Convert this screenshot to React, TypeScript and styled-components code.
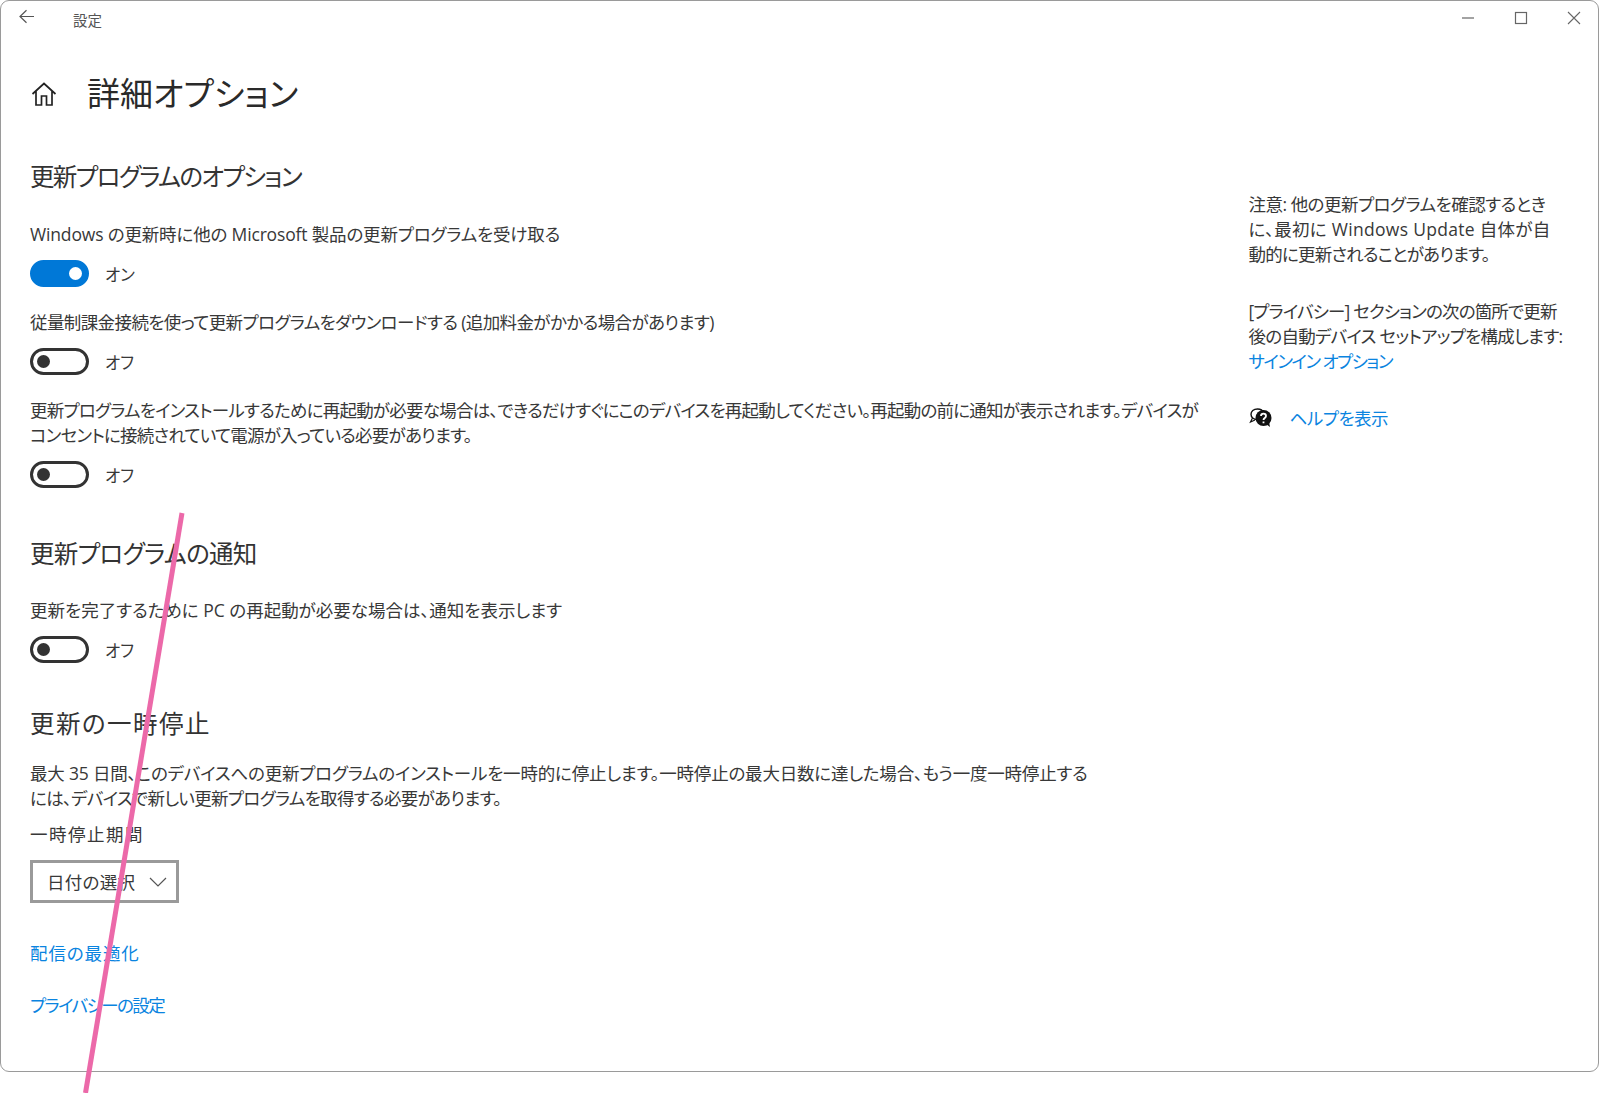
import React from 'react';
import styled, { createGlobalStyle } from 'styled-components';

const GlobalStyle = createGlobalStyle`
  html, body { margin: 0; padding: 0; background: #fff; }
  body {
    font-family: "Open Sans", "Noto Sans CJK JP", sans-serif;
    font-feature-settings: "palt";
    color: #2b2b2b;
  }
`;

const Page = styled.div`
  position: relative;
  width: 1600px;
  height: 1093px;
  overflow: hidden;
  background: #fff;
`;

const Window = styled.div`
  box-sizing: border-box;
  width: 1599px;
  height: 1072px;
  border: 1.5px solid #9a9a9a;
  border-radius: 9px;
`;

const TitleBar = styled.div`
  display: flex;
  align-items: center;
  height: 32px;
  padding-left: 17px;
  color: #555;
`;

const TitleText = styled.span`
  font-size: 14.5px;
  margin-left: 37px;
  margin-top: 5px;
`;

const WindowButtons = styled.div`
  display: flex;
  margin-left: auto;
  gap: 39px;
  padding-right: 17px;
  margin-top: 1px;
`;

const Body = styled.div`
  display: flex;
`;

const Main = styled.main`
  width: 1218px;
  padding-left: 29px;
`;

const PageHead = styled.div`
  display: flex;
  align-items: center;
  gap: 29px;
  margin-top: 38px;
  height: 46px;
`;

const PageTitle = styled.h1`
  margin: 0;
  font-size: 33px;
  font-weight: 400;
  line-height: 46px;
  color: #2a2a2a;
`;

const SectionTitle = styled.h2<{ $top: number; $ls: number }>`
  margin: ${({ $top }) => $top}px 0 0;
  font-size: 24.5px;
  font-weight: 400;
  line-height: 34px;
  letter-spacing: ${({ $ls }) => $ls}px;
  color: #333;
`;

const Text = styled.div<{ $top: number }>`
  margin-top: ${({ $top }) => $top}px;
  font-size: 17.5px;
  line-height: 25px;
  color: #383838;
`;

const Line = styled.span<{ $ls?: number }>`
  display: block;
  white-space: nowrap;
  letter-spacing: ${({ $ls }) => $ls ?? 0}px;
`;

const ToggleRow = styled.div<{ $top: number }>`
  display: flex;
  align-items: center;
  gap: 16px;
  height: 27px;
  margin-top: ${({ $top }) => $top}px;
  font-size: 16.5px;
  color: #383838;
`;

const Track = styled.span<{ $on: boolean }>`
  box-sizing: border-box;
  display: flex;
  align-items: center;
  justify-content: ${({ $on }) => ($on ? 'flex-end' : 'flex-start')};
  width: 59px;
  height: 27px;
  padding: 0 4px;
  border-radius: 14px;
  border: 3px solid ${({ $on }) => ($on ? '#0078d7' : '#333')};
  background: ${({ $on }) => ($on ? '#0078d7' : '#fff')};
`;

const Knob = styled.span<{ $on: boolean }>`
  width: 13px;
  height: 13px;
  border-radius: 50%;
  background: ${({ $on }) => ($on ? '#fff' : '#333')};
`;

const Select = styled.div`
  box-sizing: border-box;
  display: flex;
  align-items: center;
  justify-content: space-between;
  width: 149px;
  height: 43px;
  margin-top: 13px;
  padding: 0 9px 0 14px;
  border: 3px solid #9a9a9a;
  font-size: 17.5px;
  letter-spacing: 0.3px;
  color: #383838;
`;

const LinkText = styled.a<{ $top: number; $ls: number }>`
  display: block;
  margin-top: ${({ $top }) => $top}px;
  font-size: 17.5px;
  line-height: 25px;
  letter-spacing: ${({ $ls }) => $ls}px;
  color: #0a84e0;
  text-decoration: none;
`;

const Aside = styled.aside`
  margin-left: 0.5px;
  width: 345px;
  padding-top: 159px;
`;

const HelpRow = styled.div`
  display: flex;
  align-items: center;
  gap: 17px;
  margin-top: 31px;
  height: 25px;
`;

const InlineLink = styled.a<{ $ls: number }>`
  color: #0a84e0;
  text-decoration: none;
  font-size: 17.5px;
  letter-spacing: ${({ $ls }) => $ls}px;
`;

const PinkLine = styled.svg`
  position: absolute;
  left: 0;
  top: 0;
  pointer-events: none;
`;

const Toggle = ({ on }: { on: boolean }) => (
  <>
    <Track $on={on}><Knob $on={on} /></Track>
    <span>{on ? 'オン' : 'オフ'}</span>
  </>
);

const App = () => (
  <Page>
    <GlobalStyle />
    <Window>
      <TitleBar>
        <svg width="18" height="16" viewBox="0 0 18 16" fill="none" stroke="#555" strokeWidth="1.2">
          <path d="M16 7.5H2M8.5 1.2 2 7.5l6.500 6.300" />
        </svg>
        <TitleText>設定</TitleText>
        <WindowButtons>
          <svg width="14" height="14" viewBox="0 0 14 14" stroke="#666" strokeWidth="1.2" fill="none"><path d="M1 7h12" /></svg>
          <svg width="14" height="14" viewBox="0 0 14 14" stroke="#666" strokeWidth="1.2" fill="none"><rect x="1.5" y="1.5" width="11" height="11" /></svg>
          <svg width="14" height="14" viewBox="0 0 14 14" stroke="#666" strokeWidth="1.1" fill="none"><path d="M1 1l12 12M13 1 1 13" /></svg>
        </WindowButtons>
      </TitleBar>
      <Body>
        <Main>
          <PageHead>
            <svg width="28" height="26" viewBox="0 0 28 26" fill="none" stroke="#222" strokeWidth="1.7">
              <path d="M2.500 13 14 2.500 25.500 13M6 10.500V24h5.500v-9h5v9H22V10.500" />
            </svg>
            <PageTitle>詳細オプション</PageTitle>
          </PageHead>

          <SectionTitle $top={43} $ls={-1.65}>更新プログラムのオプション</SectionTitle>
          <Text $top={28}><Line $ls={-0.16}>Windows の更新時に他の Microsoft 製品の更新プログラムを受け取る</Line></Text>
          <ToggleRow $top={13}><Toggle on /></ToggleRow>
          <Text $top={23}><Line $ls={-0.6}>従量制課金接続を使って更新プログラムをダウンロードする (追加料金がかかる場合があります)</Line></Text>
          <ToggleRow $top={13}><Toggle on={false} /></ToggleRow>
          <Text $top={23}>
            <Line $ls={-0.76}>更新プログラムをインストールするために再起動が必要な場合は、できるだけすぐにこのデバイスを再起動してください。再起動の前に通知が表示されます。デバイスが</Line>
            <Line $ls={-0.78}>コンセントに接続されていて電源が入っている必要があります。</Line>
          </Text>
          <ToggleRow $top={13}><Toggle on={false} /></ToggleRow>

          <SectionTitle $top={49} $ls={-0.7}>更新プログラムの通知</SectionTitle>
          <Text $top={27}><Line>更新を完了するために PC の再起動が必要な場合は、通知を表示します</Line></Text>
          <ToggleRow $top={13}><Toggle on={false} /></ToggleRow>

          <SectionTitle $top={44} $ls={1.5}>更新の一時停止</SectionTitle>
          <Text $top={20}>
            <Line $ls={-0.2}>最大 35 日間、このデバイスへの更新プログラムのインストールを一時的に停止します。一時停止の最大日数に達した場合、もう一度一時停止する</Line>
            <Line $ls={-0.67}>には、デバイスで新しい更新プログラムを取得する必要があります。</Line>
          </Text>
          <Text $top={11}><Line $ls={1.5}>一時停止期間</Line></Text>
          <Select>
            日付の選択
            <svg width="18" height="10" viewBox="0 0 18 10" fill="none" stroke="#555" strokeWidth="1.2"><path d="M1 1l8 8 8-8" /></svg>
          </Select>
          <LinkText $top={38} $ls={0.9}>配信の最適化</LinkText>
          <LinkText $top={27} $ls={-1.55}>プライバシーの設定</LinkText>
        </Main>
        <Aside>
          <Text $top={0}>
            <Line $ls={-0.5}>注意: 他の更新プログラムを確認するとき</Line>
            <Line $ls={0.3}>に、最初に Windows Update 自体が自</Line>
            <Line $ls={-0.8}>動的に更新されることがあります。</Line>
          </Text>
          <Text $top={32}>
            <Line $ls={-0.85}>[プライバシー] セクションの次の箇所で更新</Line>
            <Line $ls={-0.73}>後の自動デバイス セットアップを構成します:</Line>
            <Line><InlineLink $ls={-1.5}>サインイン オプション</InlineLink></Line>
          </Text>
          <HelpRow>
            <svg width="24" height="22" viewBox="0 0 24 22">
              <path d="M8 12.500c-3.500 0-6-2.200-6-5.200S4.500 2 8.500 2c3 0 5.300 1.500 6 3.800" fill="none" stroke="#111" strokeWidth="1.4" />
              <path d="M3.500 11 1.500 15l4.500-2" fill="none" stroke="#111" strokeWidth="1.200" />
              <circle cx="14.500" cy="11" r="8" fill="#111" />
              <path d="M17 17l4 3-1-5z" fill="#111" />
              <path d="M12 9c0-3.200 5-3.200 5 0 0 2-2.500 2-2.500 4M14.500 14.500v1.700" fill="none" stroke="#fff" strokeWidth="1.800" />
            </svg>
            <InlineLink $ls={-0.45}>ヘルプを表示</InlineLink>
          </HelpRow>
        </Aside>
      </Body>
    </Window>
    <PinkLine width="1600" height="1093" viewBox="0 0 1600 1093">
      <path d="M182 513 85.500 1093" stroke="#ec69a9" strokeWidth="5" />
    </PinkLine>
  </Page>
);

export default App;
